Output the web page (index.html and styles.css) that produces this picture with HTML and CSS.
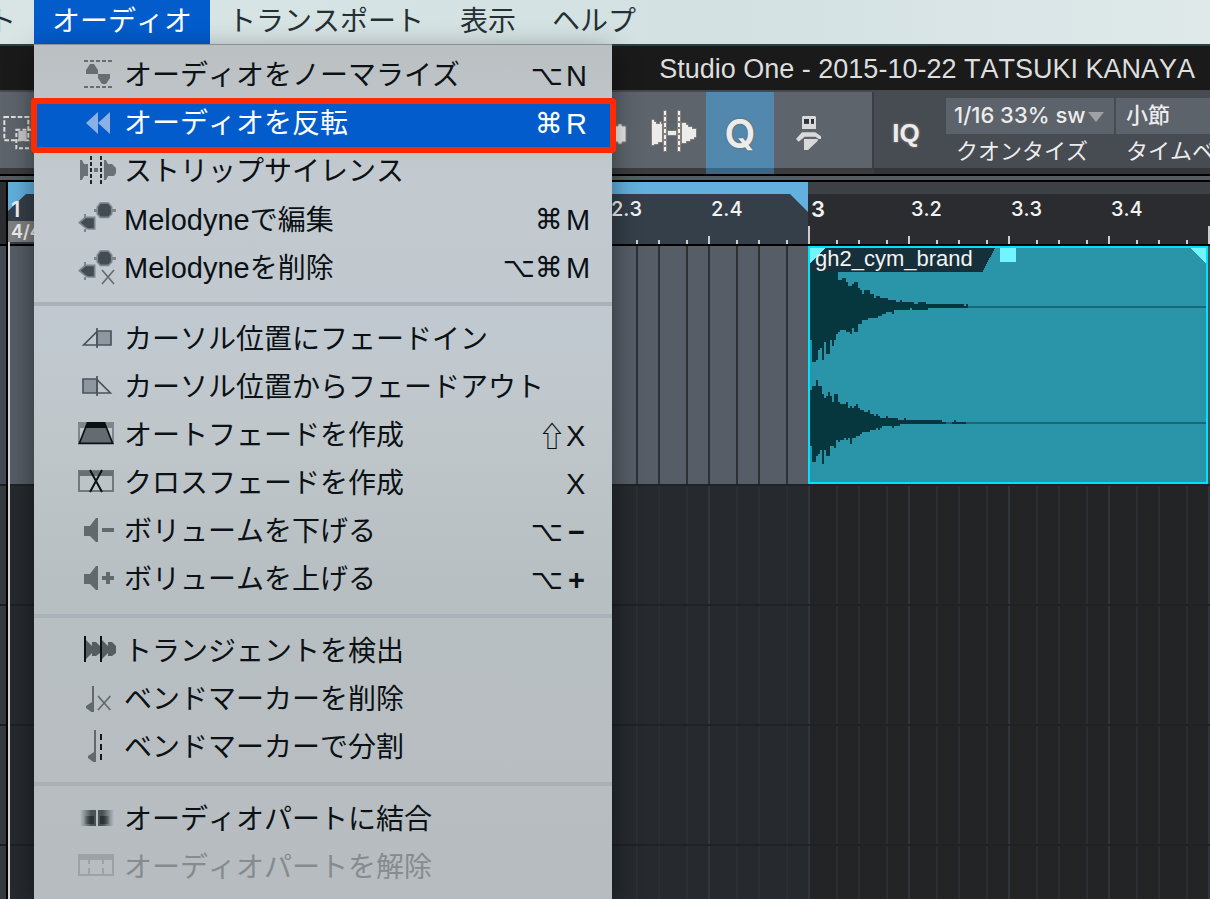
FILE: index.html
```html
<!DOCTYPE html>
<html lang="ja">
<head>
<meta charset="utf-8">
<title>Studio One</title>
<link rel="stylesheet" href="styles.css">
</head>
<body>
<div class="app">
  <nav class="menubar">
    <a class="menubar-item" href="#event">ト</a>
    <a class="menubar-item is-open" href="#audio">オーディオ</a>
    <a class="menubar-item" href="#transport">トランスポート</a>
    <a class="menubar-item" href="#view">表示</a>
    <a class="menubar-item" href="#help">ヘルプ</a>
  </nav>

  <header class="titlebar">Studio One - 2015-10-22 TATSUKI KANAYA</header>

  <div class="toolbar">
    <div class="tools">
      <button class="tool tool-range" type="button" aria-label="範囲">
        <svg viewBox="0 0 120 240"><g fill="none" stroke="#e2e0dc" stroke-width="6"><path d="M13 72H85V142H13Z" stroke-dasharray="14 6"/><path d="M49 110H112V166H49Z" stroke-dasharray="12 6"/></g><path d="M55 114H80V144H55Z" fill="#c9c9c9"/></svg>
      </button>
      <button class="tool" type="button" aria-label="波形">
        <svg viewBox="0 0 204 240"><path d="M36 84H60V90H90V99H126V93H132V99H144V93H156V99H168V147H156V153H144V147H126V141H90V150H60V156H36Z" fill="#e8e8e8" stroke="#86827a" stroke-width="3"/></svg>
      </button>
      <button class="tool" type="button" aria-label="ストリップサイレンス">
        <svg viewBox="0 0 204 240"><g stroke="#86827a" stroke-width="12"><path d="M81 52V176M123 52V176"/></g><g fill="#ececec" stroke="#86827a" stroke-width="5" paint-order="stroke"><path d="M42 81H48V87H54V93H66V87H69V93H72V147H60V153H48V156H42Z"/><path d="M90 114H114V126H90Z"/><path d="M132 90H144V96H150V102H162V108H174V132H168V138H156V144H144V150H132Z"/></g><path d="M81 54V174M123 54V174" stroke="#f2f2f2" stroke-width="6" stroke-dasharray="12 6"/></svg>
      </button>
      <button class="tool tool-q is-active" type="button">Q</button>
      <button class="tool" type="button" aria-label="マクロ">
        <svg viewBox="0 0 204 240"><path fill="#d9d9d9" fill-rule="evenodd" d="M87 69H123L126 72V108H84V72ZM90 78V92H105V78ZM111 78V92H120V78Z"/><path fill="#2f343b" d="M90 78H105V92H90ZM111 78H120V92H111Z"/><path fill="#d9d9d9" d="M84 118H124L141 130V138H134L124 131H92L74 146L66 138ZM90 138H131V144L102 171H90Z"/></svg>
      </button>
    </div>
    <div class="params">
      <button class="iq" type="button">IQ</button>
      <div class="field">
        <div class="select-wrap">
          <select id="quantize"><option>1/16 33% sw</option></select>
          <svg class="caret" viewBox="0 0 16 10"><path d="M0 0H16L8 10Z" fill="#9fa3a7"/></svg>
        </div>
        <label for="quantize">クオンタイズ</label>
      </div>
      <div class="field field-last">
        <select id="timebase" class="kana"><option>小節</option></select>
        <label for="timebase">タイムベ</label>
      </div>
    </div>
  </div>

  <div class="splitter"></div>

  <main class="arrange">
    <div class="gutter"><div class="gutter-ruler"></div><div class="gutter-track"></div><div class="gutter-rest"></div></div>
    <div class="timeline">
      <div class="ruler">
        <svg class="loop" viewBox="0 0 800 30"><path d="M0 0H800V30L782 12H18L0 29Z" fill="#62b0de"/></svg>
        <div class="cells">
          <div class="cell bar">1<span class="meter">4/4</span></div>
          <div class="cell"></div><div class="cell"></div><div class="cell"></div>
          <div class="cell bar"></div><div class="cell"></div>
          <div class="cell">2.3</div><div class="cell">2.4</div>
          <div class="cell bar">3</div><div class="cell">3.2</div><div class="cell">3.3</div><div class="cell">3.4</div>
          <div class="cell bar"></div>
        </div>
      </div>
      <div class="lane">
        <div class="clip">
          <svg class="wave" viewBox="60 54 1188 702" preserveAspectRatio="none" shape-rendering="crispEdges">
            <path fill="#1b6775" d="M456 228H1248V234H456ZM456 576H1248V582H456Z"/>
            <path fill="#07373e" d="M60 54H144V150H156V144H168V156H174V168H186V162H192V156H204V174H210V180H216V192H222V180H240V192H252V204H258V198H270V204H294V210H318V216H330V210H336V216H372V222H384V216H408V222H522V228H528V222H534V234H414V240H366V234H360V240H312V252H306V246H288V252H276V258H264V264H234V270H216V282H204V306H192V294H186V312H180V306H168V300H150V306H144V312H138V330H132V348H126V330H120V372H108V336H102V390H96V354H90V360H84V390H78V396H66V330H60Z"/>
            <path fill="#07373e" d="M60 480H66V468H78V450H84V468H96V492H102V504H108V498H114V486H120V498H126V516H132V492H144V516H150V522H168V516H174V534H180V528H186V534H192V528H198V522H204V534H210V540H222V546H234V540H240V552H252V558H258V552H264V558H270V564H288V558H294V564H324V570H342V564H348V570H456V576H468V582H330V588H312V594H306V588H276V594H270V600H264V594H258V600H240V606H216V612H210V618H198V624H186V642H180V624H174V630H168V624H162V630H150V636H144V630H138V654H132V648H120V678H108V660H102V702H96V660H90V672H84V678H78V696H66V648H60ZM486 576H492V570H498V576H528V582H486Z"/>
            <path fill="#15303a" d="M60 54H615L577 126H60Z"/>
            <path fill="#72f5ff" d="M60 54H108L60 100ZM630 54H678V96H630ZM1200 54H1248V102Z"/>
          </svg>
          <span class="clip-name">gh2_cym_brand</span>
        </div>
      </div>
      <div class="empty-lanes"></div>
      <div class="playhead"></div>
    </div>
  </main>

  <ul class="menu">
    <li><button class="entry" type="button"><svg viewBox="0 0 120 144"><g fill="#676d70"><path d="M24 69V57L36 39H48L60 57V69ZM60 69H96V81L84 99H72L60 81Z"/></g><path d="M18 30H102M18 108H102" stroke="#676d70" stroke-width="6" stroke-dasharray="12 6"/></svg><span>オーディオをノーマライズ</span><kbd class="mods">⌥</kbd><kbd class="key">N</kbd></button></li>
    <li><button class="entry is-selected" type="button"><svg viewBox="0 0 120 144"><path d="M24 72L60 39V105ZM60 72L96 39V105Z" fill="#8bb0e6"/></svg><span>オーディオを反転</span><kbd class="mods">⌘</kbd><kbd class="key">R</kbd></button></li>
    <li><button class="entry" type="button"><svg viewBox="0 0 120 144"><path fill="#6a7278" d="M6 39H12L18 51H30V87H18L12 99H6ZM48 63H60V75H48ZM78 39H84L90 51H102L108 57L114 63V78L108 87H90L84 99H78Z"/><path d="M39 27V111M69 27V111" stroke="#20272b" stroke-width="6" stroke-dasharray="12 6"/></svg><span>ストリップサイレンス</span></button></li>
    <li><button class="entry" type="button"><svg viewBox="0 0 120 144"><g fill="#434b53" stroke="#7d868d" stroke-width="5"><path d="M67 24H91L101 36V57L91 67H67L58 57V36Z"/><path d="M4 83L22 67H50V102H30L22 98Z"/></g><path d="M102 42H114V51H102ZM48 42H57V51H48ZM18 57H24V66H18ZM18 102H24V111H18Z" fill="#7d868d"/></svg><span><span class="latin">Melodyne</span>で編集</span><kbd class="mods">⌘</kbd><kbd class="key">M</kbd></button></li>
    <li><button class="entry" type="button"><svg viewBox="0 0 120 144"><g fill="#434b53" stroke="#7d868d" stroke-width="5"><path d="M67 24H91L101 36V57L91 67H67L58 57V36Z"/><path d="M4 83L22 67H50V102H30L22 98Z"/></g><path d="M102 42H114V51H102ZM48 42H57V51H48ZM18 57H24V66H18ZM18 102H24V111H18Z" fill="#7d868d"/><path d="M72 81L108 123M108 81L72 123" stroke="#646c73" stroke-width="5"/></svg><span><span class="latin">Melodyne</span>を削除</span><kbd class="mods">⌥⌘</kbd><kbd class="key">M</kbd></button></li>
    <li class="separator" role="separator"></li>
    <li><button class="entry" type="button"><svg viewBox="0 0 120 144"><g stroke="#4b545b" stroke-width="5"><path d="M57 48H99V90H57Z" fill="#8e979f"/><path d="M57 50L17 90H57" fill="none"/><path d="M57 39V99"/></g></svg><span>カーソル位置にフェードイン</span></button></li>
    <li><button class="entry" type="button"><svg viewBox="0 0 120 144"><g stroke="#4b545b" stroke-width="5"><path d="M15 48H57V90H15Z" fill="#8e979f"/><path d="M57 50L97 90H57" fill="none"/><path d="M57 39V99"/></g></svg><span>カーソル位置からフェードアウト</span></button></li>
    <li><button class="entry" type="button"><svg viewBox="0 0 120 144"><path d="M3 36H105V96H3Z" fill="none" stroke="#7f878b" stroke-width="6"/><path d="M3 36H105V51H3Z" fill="#7f878b"/><path d="M28 36H80L104 97H4Z" fill="#646c71" stroke="#0a1013" stroke-width="5"/><path d="M28 33H80L87 51H21Z" fill="#0a1013"/></svg><span>オートフェードを作成</span><kbd class="mods mods-shift">⇧</kbd><kbd class="key">X</kbd></button></li>
    <li><button class="entry" type="button"><svg viewBox="0 0 120 144"><path d="M3 36H105V96H3Z" fill="none" stroke="#71797d" stroke-width="6"/><path d="M3 36H105V51H3Z" fill="#676f73"/><path d="M36 33L72 99M72 33L36 99" stroke="#0a1013" stroke-width="6"/></svg><span>クロスフェードを作成</span><kbd class="key">X</kbd></button></li>
    <li><button class="entry" type="button"><svg viewBox="0 0 120 144"><path d="M18 57H36L54 33H60V105H54L36 87H18ZM72 63H108V75H72Z" fill="#62696d"/></svg><span>ボリュームを下げる</span><kbd class="mods">⌥</kbd><kbd class="key key-sign">−</kbd></button></li>
    <li><button class="entry" type="button"><svg viewBox="0 0 120 144"><path d="M18 57H36L54 33H60V105H54L36 87H18ZM72 63H84V51H96V63H108V75H96V87H84V75H72Z" fill="#62696d"/></svg><span>ボリュームを上げる</span><kbd class="mods">⌥</kbd><kbd class="key key-sign">+</kbd></button></li>
    <li class="separator" role="separator"></li>
    <li><button class="entry" type="button"><svg viewBox="0 0 120 144"><path d="M24 39L36 51L42 57V45H54L66 57V39H72L90 57V45H102L114 57V78L102 87H90V78L72 96H66V78L54 87H42V78L24 96Z" fill="#555d61"/><path d="M21 27V105M69 27V105" stroke="#0a1013" stroke-width="6"/></svg><span>トランジェントを検出</span></button></li>
    <li><button class="entry" type="button"><svg viewBox="0 0 120 144"><path d="M42 33H48V111H40L24 99V93L42 81Z" fill="#62696d"/><path d="M60 63L97 105M97 63L60 105" stroke="#62696d" stroke-width="5"/></svg><span>ベンドマーカーを削除</span></button></li>
    <li><button class="entry" type="button"><svg viewBox="0 0 120 144"><path d="M48 21H54V117H46L30 105V99L48 87Z" fill="#62696d"/><path d="M69 33V51M69 63V81M69 93V111" stroke="#14191c" stroke-width="6"/></svg><span>ベンドマーカーで分割</span></button></li>
    <li class="separator" role="separator"></li>
    <li><button class="entry" type="button"><svg viewBox="0 0 120 144"><defs><linearGradient id="fadeL"><stop offset="0" stop-color="#4a5256" stop-opacity="0"/><stop offset=".7" stop-color="#4a5256"/></linearGradient><linearGradient id="fadeR"><stop offset=".3" stop-color="#4a5256"/><stop offset="1" stop-color="#4a5256" stop-opacity="0"/></linearGradient><linearGradient id="coreL"><stop offset="0" stop-color="#2c3337" stop-opacity="0"/><stop offset=".7" stop-color="#2c3337"/></linearGradient><linearGradient id="coreR"><stop offset=".3" stop-color="#2c3337"/><stop offset="1" stop-color="#2c3337" stop-opacity="0"/></linearGradient></defs><path d="M6 45H54V93H6Z" fill="url(#fadeL)"/><path d="M60 45H108V93H60Z" fill="url(#fadeR)"/><path d="M18 63H48V87H18Z" fill="url(#coreL)"/><path d="M66 63H96V87H66Z" fill="url(#coreR)"/></svg><span>オーディオパートに結合</span></button></li>
    <li><button class="entry" type="button" disabled><svg viewBox="0 0 120 144"><path d="M3 36H105V96H3Z" fill="none" stroke="#9ca2a5" stroke-width="6"/><path d="M3 36H105V51H3ZM30 51H36V63H30ZM30 75H36V93H30ZM72 51H78V63H72ZM72 75H78V93H72Z" fill="#9ca2a5"/></svg><span>オーディオパートを解除</span></button></li>
  </ul>
</div>
</body>
</html>
```

FILE: styles.css
```css
* { box-sizing: border-box; }

body {
  margin: 0;
  font-family: "Liberation Sans", "Noto Sans CJK JP", sans-serif;
  font-size: 28px;
  font-kerning: none;
  background: #232425;
}

button, select, kbd { font: inherit; font-kerning: none; color: inherit; }
button, select { border: 0; margin: 0; padding: 0; background: none; appearance: none; }
svg { display: block; }

.app {
  position: relative;
  display: flex;
  flex-direction: column;
  min-height: 100vh;
  overflow: hidden;
}

/* menu bar */
.menubar {
  display: flex;
  height: 44px;
  background: linear-gradient(90deg, #d9e5e5, #d3e1e2 60%, #dfe9ea);
}
.menubar-item {
  padding: 0 18px;
  line-height: 44px;
  white-space: nowrap;
  color: #253034;
  text-decoration: none;
}
.menubar-item:first-child { margin-left: -30px; }
.menubar-item.is-open { background: #025ccb; color: #fff; }

.titlebar {
  height: 46px;
  padding-right: 15px;
  border-top: 2px solid #2c4146;
  background: #1a1a1a;
  color: #dedede;
  font-size: 27px;
  line-height: 46px;
  text-align: right;
  white-space: nowrap;
}

/* toolbar */
.toolbar {
  display: flex;
  height: 84px;
  border-top: 2px solid #46494e;
}
.tools {
  display: flex;
  flex: none;
  width: 872px;
  padding-right: 30px;
  background: linear-gradient(#5d646c 76px, #3b3c40 76px);
}
.tool { width: 68px; height: 82px; }
.tool svg { width: 68px; height: 80px; }
.tool-range { width: 40px; margin-right: auto; }
.tool-range svg { width: 40px; }
.tool-q {
  font-family: Inter, sans-serif;
  font-size: 40px;
  font-weight: 600;
  color: #ececec;
  text-shadow: 0 0 2px #6c6a66, 0 0 2px #6c6a66;
}
.tool.is-active { background: linear-gradient(#5288ae 76px, #3b6580 76px); }
.params {
  display: flex;
  flex: 1;
  min-width: 0;
  border-left: 2px solid #3a3d42;
  background: linear-gradient(#474b52 76px, #333539 76px);
  color: #ececec;
}
.iq {
  flex: none;
  width: 72px;
  padding-right: 8px;
  font-size: 26px;
  font-weight: bold;
  text-shadow: 0 0 3px #8c8a86;
}
.field {
  flex: none;
  width: 168px;
  margin-right: 2px;
  padding-top: 6px;
  font-size: 22px;
}
.field-last { flex: 1; min-width: 0; margin: 0; overflow: hidden; }
.field select {
  display: block;
  width: 100%;
  height: 36px;
  padding: 0 0 2px 8px;
  background: #5c636b;
  font-family: Inter, "Noto Sans CJK JP", sans-serif;
  font-weight: 500;
}
.field select.kana { padding-left: 10px; }
.field label { display: block; padding-left: 10px; line-height: 36px; white-space: nowrap; }
.select-wrap { position: relative; }
.caret { position: absolute; right: 10px; top: 14px; width: 16px; height: 10px; pointer-events: none; }

.splitter {
  height: 8px;
  border: solid #000;
  border-width: 2px 0;
  background: #555d63;
}

/* arrangement */
.arrange { display: flex; flex: 1; }
.gutter {
  display: flex;
  flex-direction: column;
  width: 8px;
  border-right: 2px solid #000;
}
.gutter-ruler { height: 64px; background: #2b2d31; border-bottom: 2px solid #000; }
.gutter-track { height: 240px; background: #434a54; border-bottom: 2px solid #1c1e20; }
.gutter-rest { flex: 1; background: repeating-linear-gradient(#353a3c 0 118px, #1c1e20 118px 120px); }

.timeline {
  position: relative;
  display: flex;
  flex-direction: column;
  flex: 1;
  min-width: 0;
  overflow: hidden;
}
.ruler {
  position: relative;
  height: 64px;
  border-bottom: 2px solid #000;
  background:
    linear-gradient(#353f4a, #353f4a) 0 0 / 800px 100% no-repeat,
    linear-gradient(#3d4044 12px, #2a2c30 12px);
}
.loop { position: absolute; top: 0; left: 0; width: 800px; height: 30px; }
.cells { position: relative; display: flex; height: 62px; }
.cell {
  flex: none;
  width: 100px;
  padding: 15px 0 0 3px;
  font-family: Inter, sans-serif;
  font-size: 20px;
  font-weight: 500;
  line-height: 24px;
  color: #f2f2f2;
  background:
    linear-gradient(#cdcdcd, #cdcdcd) 0 100% / 2px 8px no-repeat,
    linear-gradient(#cdcdcd, #cdcdcd) 28px 100% / 2px 4px no-repeat,
    linear-gradient(#cdcdcd, #cdcdcd) 50px 100% / 2px 4px no-repeat,
    linear-gradient(#cdcdcd, #cdcdcd) 78px 100% / 2px 4px no-repeat;
}
.cell.bar {
  font-size: 22px;
  font-weight: 600;
  background:
    linear-gradient(#cdcdcd, #cdcdcd) 0 100% / 2px 18px no-repeat,
    linear-gradient(#cdcdcd, #cdcdcd) 28px 100% / 2px 4px no-repeat,
    linear-gradient(#cdcdcd, #cdcdcd) 50px 100% / 2px 4px no-repeat,
    linear-gradient(#cdcdcd, #cdcdcd) 78px 100% / 2px 4px no-repeat;
}
.meter {
  display: block;
  margin-left: -3px;
  padding-left: 3px;
  background: #808080;
  font-size: 18px;
  line-height: 21px;
}
.lane {
  display: grid;
  grid-template-columns: repeat(13, 100px);
  height: 238px;
  background:
    linear-gradient(90deg, transparent 1200px, #474e57 1200px),
    repeating-linear-gradient(90deg, #2d3136 0 2px, #565d66 2px 28px, #2d3136 28px 30px, #565d66 30px 50px, #2d3136 50px 52px, #565d66 52px 78px, #2d3136 78px 80px, #565d66 80px 100px);
}
.clip {
  position: relative;
  grid-column: 9 / span 4;
  border: 2px solid #00e1fb;
  background: #2a94a8;
}
.wave { width: 100%; height: 100%; }
.clip-name {
  position: absolute;
  top: 0;
  left: 5px;
  font-size: 22px;
  line-height: 22px;
  color: #f4f4f4;
}
.empty-lanes {
  flex: 1;
  border-top: 2px solid #202326;
  background:
    repeating-linear-gradient(transparent 0 118px, #1f2224 118px 120px),
    repeating-linear-gradient(90deg, #3a414a99 0 2px, transparent 2px 28px, #2f333999 28px 30px, transparent 30px 50px, #2f333999 50px 52px, transparent 52px 78px, #2f333999 78px 80px, transparent 80px 100px),
    linear-gradient(90deg, #262a2e 800px, #232425 800px);
}
.playhead {
  position: absolute;
  top: 60px;
  bottom: 0;
  left: 0;
  width: 2px;
  background: #d4d4d4;
}

/* drop-down menu */
.menu {
  position: absolute;
  top: 44px;
  left: 34px;
  width: 578px;
  min-height: calc(100% - 44px);
  margin: 0;
  padding: 6px 0 8px;
  list-style: none;
  border-top: 1px solid #8b9193;
  background: linear-gradient(#bbc0c2, #c2c9cf 130px, #c1c9d0 300px, #bfc7cb 380px, #b8bfc2 540px, #b7bcc0);
  box-shadow: 0 8px 26px rgba(0, 0, 0, .45);
}
.entry {
  position: relative;
  display: flex;
  align-items: center;
  width: 100%;
  height: 48px;
  padding-left: 44px;
  color: #0b1114;
  text-align: left;
  white-space: nowrap;
}
.entry svg { flex: none; width: 40px; height: 48px; margin-right: 6px; }
.entry > span { flex: 1; padding-top: 2px; line-height: 46px; }
.latin { font-size: 29px; }
.mods { margin-right: 3px; font-family: "DejaVu Sans", sans-serif; }
.mods-shift { margin-right: 0; font-family: "Noto Sans CJK JP", "DejaVu Sans", sans-serif; }
.key { width: 46px; padding-top: 2px; font-size: 29px; }
.key-sign { padding-left: 2px; font-weight: bold; }
.entry:disabled { color: #858b8e; }
.entry.is-selected { background: #025ccb; color: #fff; }
.entry.is-selected::after {
  content: "";
  position: absolute;
  inset: -1px -4px -6px -3px;
  border: 6px solid #ff2a00;
  border-radius: 4px;
}
.separator { height: 4px; margin: 11px 0 9px; background: #abb2b7; }
```
